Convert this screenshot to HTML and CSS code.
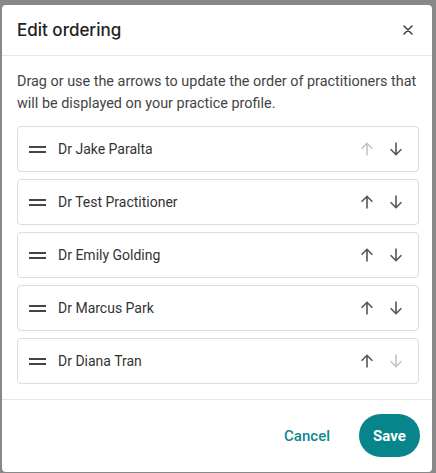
FILE: index.html
```html
<!DOCTYPE html>
<html>
<head>
<meta charset="utf-8">
<link rel="stylesheet" href="styles.css">
</head>
<body>
<div class="dialog">
  <div class="header">
    <div class="title">Edit ordering</div>
    <button class="close" aria-label="Close">
      <svg width="10" height="10" viewBox="0 0 10 10"><path d="M1 1 L9 9 M9 1 L1 9" stroke="#444" stroke-width="1.6" stroke-linecap="round" fill="none"/></svg>
    </button>
  </div>
  <div class="content">
    <p class="desc">Drag or use the arrows to update the order of practitioners that will be displayed on your practice profile.</p>
    <ul class="list">
      <li class="row">
        <span class="handle"></span>
        <span class="name">Dr Jake Paralta</span>
        <span class="arrows">
          <svg class="arrow disabled" width="16" height="16" viewBox="0 0 16 16"><path d="M8 14.5 V2.5 M2.6 7.7 L8 2.3 L13.4 7.7" fill="none" stroke="currentColor" stroke-width="1.6"/></svg>
          <svg class="arrow" width="16" height="16" viewBox="0 0 16 16"><path d="M8 1.5 V13.5 M2.6 8.3 L8 13.7 L13.4 8.3" fill="none" stroke="currentColor" stroke-width="1.6"/></svg>
        </span>
      </li>
      <li class="row">
        <span class="handle"></span>
        <span class="name">Dr Test Practitioner</span>
        <span class="arrows">
          <svg class="arrow" width="16" height="16" viewBox="0 0 16 16"><path d="M8 14.5 V2.5 M2.6 7.7 L8 2.3 L13.4 7.7" fill="none" stroke="currentColor" stroke-width="1.6"/></svg>
          <svg class="arrow" width="16" height="16" viewBox="0 0 16 16"><path d="M8 1.5 V13.5 M2.6 8.3 L8 13.7 L13.4 8.3" fill="none" stroke="currentColor" stroke-width="1.6"/></svg>
        </span>
      </li>
      <li class="row">
        <span class="handle"></span>
        <span class="name">Dr Emily Golding</span>
        <span class="arrows">
          <svg class="arrow" width="16" height="16" viewBox="0 0 16 16"><path d="M8 14.5 V2.5 M2.6 7.7 L8 2.3 L13.4 7.7" fill="none" stroke="currentColor" stroke-width="1.6"/></svg>
          <svg class="arrow" width="16" height="16" viewBox="0 0 16 16"><path d="M8 1.5 V13.5 M2.6 8.3 L8 13.7 L13.4 8.3" fill="none" stroke="currentColor" stroke-width="1.6"/></svg>
        </span>
      </li>
      <li class="row">
        <span class="handle"></span>
        <span class="name">Dr Marcus Park</span>
        <span class="arrows">
          <svg class="arrow" width="16" height="16" viewBox="0 0 16 16"><path d="M8 14.5 V2.5 M2.6 7.7 L8 2.3 L13.4 7.7" fill="none" stroke="currentColor" stroke-width="1.6"/></svg>
          <svg class="arrow" width="16" height="16" viewBox="0 0 16 16"><path d="M8 1.5 V13.5 M2.6 8.3 L8 13.7 L13.4 8.3" fill="none" stroke="currentColor" stroke-width="1.6"/></svg>
        </span>
      </li>
      <li class="row">
        <span class="handle"></span>
        <span class="name">Dr Diana Tran</span>
        <span class="arrows">
          <svg class="arrow" width="16" height="16" viewBox="0 0 16 16"><path d="M8 14.5 V2.5 M2.6 7.7 L8 2.3 L13.4 7.7" fill="none" stroke="currentColor" stroke-width="1.6"/></svg>
          <svg class="arrow disabled" width="16" height="16" viewBox="0 0 16 16"><path d="M8 1.5 V13.5 M2.6 8.3 L8 13.7 L13.4 8.3" fill="none" stroke="currentColor" stroke-width="1.6"/></svg>
        </span>
      </li>
    </ul>
  </div>
  <div class="footer">
    <button class="btn-cancel">Cancel</button>
    <button class="btn-save">Save</button>
  </div>
</div>
</body>
</html>
```

FILE: styles.css
```css
* { box-sizing: border-box; }
html, body { margin: 0; padding: 0; }
body {
  background: #888888;
  padding: 5px 4px 1px 2px;
  font-family: Roboto, "Liberation Sans", sans-serif;
  height: 473px;
  overflow: hidden;
}
.dialog {
  background: #ffffff;
  width: 430px;
  height: 467px;
  border-radius: 4px;
  display: flex;
  flex-direction: column;
}
.header {
  height: 51px;
  display: flex;
  align-items: center;
  justify-content: space-between;
  padding: 0 19px 0 15px;
  border-bottom: 1px solid #e6e6e6;
}
.title {
  font-family: Inter, Roboto, sans-serif;
  font-size: 17px;
  font-weight: 500;
  color: #222;
}
.close {
  border: none;
  background: none;
  padding: 0;
  width: 10px;
  height: 10px;
  display: flex;
}
.content {
  padding: 15px 13px 15px 15px;
  border-bottom: 1px solid #e6e6e6;
}
.desc {
  margin: 0 0 11px 0;
  font-size: 14.4px;
  line-height: 22px;
  color: #444;
}
.list {
  list-style: none;
  margin: 0;
  padding: 0;
  display: flex;
  flex-direction: column;
  gap: 7px;
}
.row {
  height: 46px;
  border: 1px solid #dcdcdc;
  border-radius: 4px;
  display: flex;
  align-items: center;
  padding: 0 14px 0 11px;
}
.handle {
  width: 17px;
  height: 7px;
  border-top: 2px solid #444;
  border-bottom: 2px solid #444;
  margin-right: 12px;
}
.name {
  flex: 1;
  font-size: 14px;
  color: #333;
}
.arrows {
  display: flex;
  gap: 13px;
}
.arrow { color: #555; display: block; }
.arrow.disabled { color: #c4c4c4; }
.footer {
  flex: 1;
  display: flex;
  justify-content: flex-end;
  align-items: flex-start;
  padding: 14px 12px 0 0;
  gap: 29px;
}
.btn-cancel {
  border: none;
  background: none;
  font-family: Roboto, "Liberation Sans", sans-serif;
  font-size: 15px;
  font-weight: 500;
  color: #11868b;
  height: 43px;
  padding: 0;
}
.btn-save {
  border: none;
  background: #08858a;
  color: #fff;
  font-family: Roboto, "Liberation Sans", sans-serif;
  font-size: 15px;
  font-weight: 700;
  height: 43px;
  width: 61px;
  border-radius: 22px;
  padding: 0;
}
```
